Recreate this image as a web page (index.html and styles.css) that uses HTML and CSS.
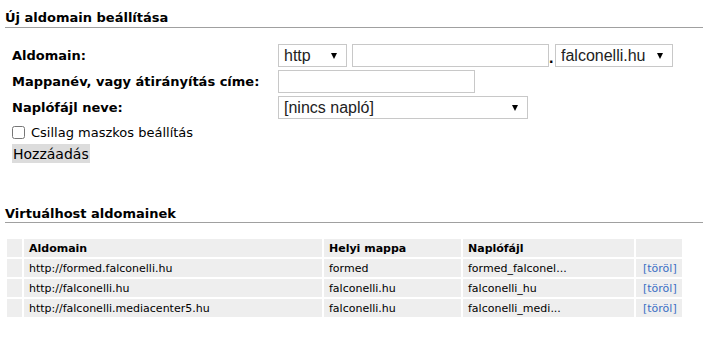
FILE: index.html
```html
<!DOCTYPE html>
<html lang="hu">
<head>
<meta charset="UTF-8" />
<title>Aldomainek</title>
<link rel="stylesheet" href="styles.css">
</head>
<body>

  <h3 class="section-title">Új aldomain beállítása</h3>

  <form class="subdomain-form">
    <div class="form-row">
      <label class="form-label" for="proto">Aldomain:</label>
      <span class="select-wrap select-proto">
        <select id="proto"><option>http</option><option>https</option></select>
      </span>
      <input type="text" class="text-input input-sub" id="sub">
      <span class="dot">.</span>
      <span class="select-wrap select-domain">
        <select id="domain"><option>falconelli.hu</option></select>
      </span>
    </div>
    <div class="form-row">
      <label class="form-label" for="folder">Mappanév, vagy átirányítás címe:</label>
      <input type="text" class="text-input input-folder" id="folder">
    </div>
    <div class="form-row">
      <label class="form-label" for="log">Naplófájl neve:</label>
      <span class="select-wrap select-log">
        <select id="log"><option>[nincs napló]</option></select>
      </span>
    </div>
    <div class="check-row">
      <input type="checkbox" id="wildcard">
      <label for="wildcard">Csillag maszkos beállítás</label>
    </div>
    <button type="submit" class="add-btn">Hozzáadás</button>
  </form>

  <h3 class="section-title second">Virtuálhost aldomainek</h3>

  <table class="vhost-table">
    <tr>
      <th class="c-pad"></th>
      <th class="c-domain">Aldomain</th>
      <th class="c-folder">Helyi mappa</th>
      <th class="c-log">Naplófájl</th>
      <th class="c-act"></th>
    </tr>
    <tr>
      <td></td>
      <td>http://formed.falconelli.hu</td>
      <td>formed</td>
      <td>formed_falconel...</td>
      <td><a href="#">[töröl]</a></td>
    </tr>
    <tr>
      <td></td>
      <td>http://falconelli.hu</td>
      <td>falconelli.hu</td>
      <td>falconelli_hu</td>
      <td><a href="#">[töröl]</a></td>
    </tr>
    <tr>
      <td></td>
      <td>http://falconelli.mediacenter5.hu</td>
      <td>falconelli.hu</td>
      <td>falconelli_medi...</td>
      <td><a href="#">[töröl]</a></td>
    </tr>
  </table>

</body>
</html>
```

FILE: styles.css
```css
body {
  margin: 0;
  font-family: "DejaVu Sans", Verdana, sans-serif;
  color: #000;
  background: #fff;
}

.section-title {
  margin: 0 8px 0 5px;
  padding-top: 9px;
  height: 18px;
  font-size: 13px;
  line-height: 18px;
  border-bottom: 1px solid #a0a0a0;
}
.section-title.second {
  margin-top: 42px;
  padding-top: 0;
  height: 17px;
}

.subdomain-form {
  padding: 16px 0 0 12px;
}

.form-row {
  display: flex;
  align-items: center;
  height: 23px;
  margin-bottom: 3px;
}
.form-label {
  width: 266px;
  flex: none;
  font-weight: bold;
  font-size: 13px;
}

.select-wrap {
  position: relative;
  display: inline-block;
}
.select-wrap::after {
  content: "";
  position: absolute;
  top: 9px;
  right: 10px;
  border-left: 3px solid transparent;
  border-right: 3px solid transparent;
  border-top: 6px solid #000;
  pointer-events: none;
}
select, .text-input {
  box-sizing: border-box;
  height: 23px;
  border: 1px solid #c8c8c8;
  border-radius: 0;
  background: #fff;
  font-family: "Liberation Sans", Arial, sans-serif;
  font-size: 16px;
  color: #222;
  margin: 0;
}
select {
  appearance: none;
  -webkit-appearance: none;
  padding: 0 20px 0 5px;
}
.select-proto select { width: 69px; }
.select-domain select { width: 118px; }
.select-log select { width: 250px; }

.input-sub { width: 197px; margin-left: 5px; }
.input-folder { width: 197px; }

.dot {
  width: 6px;
  font-family: "Liberation Sans", Arial, sans-serif;
  font-size: 16px;
  font-weight: bold;
  padding-top: 4px;
}

.check-row {
  display: flex;
  align-items: center;
  height: 20px;
  font-size: 13px;
}
.check-row input {
  margin: 0 6px 0 0;
  width: 13px;
  height: 13px;
}

.add-btn {
  margin-top: 2px;
  padding: 0 1px;
  border: none;
  background: #dcdcdc;
  height: 19px;
  font-family: "DejaVu Sans", Verdana, sans-serif;
  font-size: 14px;
  color: #000;
  cursor: pointer;
}

.vhost-table {
  margin: 14px 0 0 5px;
  border-spacing: 2px;
  font-size: 11px;
}
.vhost-table th,
.vhost-table td {
  background: #eeeeee;
  height: 18px;
  padding: 0 0 0 5px;
  text-align: left;
  white-space: nowrap;
}
.vhost-table td:first-child,
.vhost-table th:first-child {
  padding: 0;
}
.c-pad { width: 15px; }
.c-domain { width: 293px; }
.c-folder { width: 132px; }
.c-log { width: 166px; }
.c-act { width: 41px; }

.vhost-table a {
  color: #3a6fc4;
  text-decoration: none;
  padding-left: 2px;
}
```
